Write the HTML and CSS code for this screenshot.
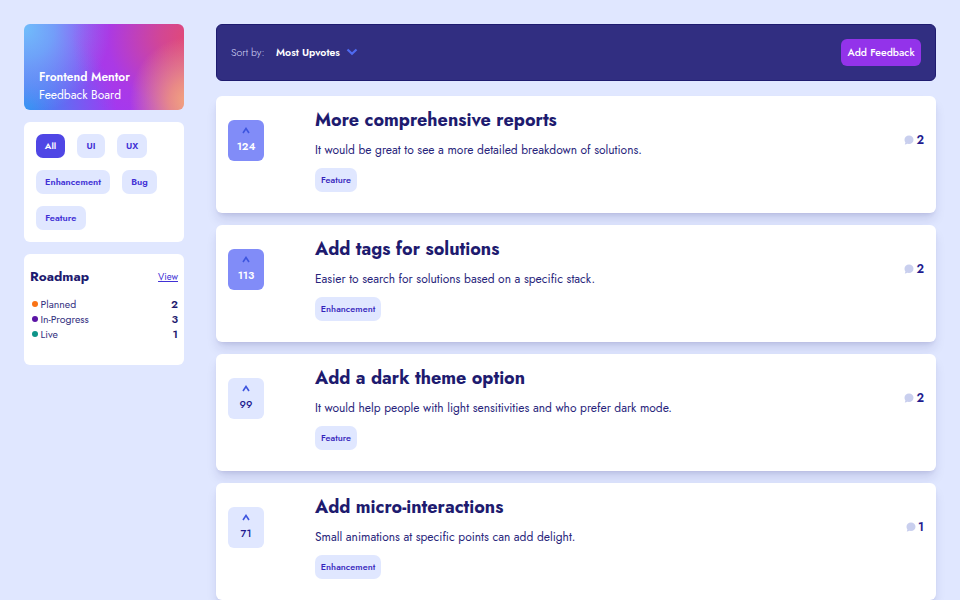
FILE: index.html
```html
<!DOCTYPE html>
<html lang="en">
<head>
<meta charset="utf-8">
<title>Frontend Mentor Feedback Board</title>
<link rel="stylesheet" href="styles.css">
</head>
<body>
<svg class="defs" width="0" height="0">
<symbol id="up" viewBox="0 0 8 7"><path d="M1 6 4 1.5 7 6" fill="none" stroke="currentColor" stroke-width="1.6"/></symbol>
<symbol id="bubble" viewBox="0 0 10 10"><path d="M5 .5C7.6.5 9.5 2.3 9.5 4.7S7.6 9 5 9L3.2 8.8Q2.2 9.7.8 9.6L1.4 7.6Q.5 6.4.5 4.7C.5 2.3 2.4.5 5 .5Z" fill="currentColor"/></symbol>
</svg>
<div class="page">
<aside class="sidebar">
<header class="brand"><h1>Frontend Mentor</h1><p>Feedback Board</p></header>
<nav class="filters">
<button class="chip active w-all">All</button><button class="chip w-ui">UI</button><button class="chip w-ux">UX</button><button class="chip w-enh">Enhancement</button><button class="chip w-bug">Bug</button><button class="chip w-feat">Feature</button>
</nav>
<section class="roadmap">
<div class="roadmap-head"><h2>Roadmap</h2><a href="#">View</a></div>
<ul>
<li><i class="dot planned"></i><span>Planned</span><b>2</b></li>
<li><i class="dot progress"></i><span>In-Progress</span><b>3</b></li>
<li><i class="dot live"></i><span>Live</span><b>1</b></li>
</ul>
</section>
</aside>
<main>
<div class="toolbar"><span class="sort">Sort by:</span><span class="selected">Most Upvotes</span><svg class="down" viewBox="0 0 12 8"><path d="M1.5 1.5 6 5.8 10.5 1.5" fill="none" stroke="currentColor" stroke-width="2.2"/></svg><button class="add">Add Feedback</button></div>
<article class="card">
<button class="vote voted"><svg><use href="#up"/></svg><span>124</span></button>
<div class="body"><h3>More comprehensive reports</h3><p>It would be great to see a more detailed breakdown of solutions.</p><span class="tag tag-feat">Feature</span></div>
<div class="comments"><svg><use href="#bubble"/></svg><span>2</span></div>
</article>
<article class="card">
<button class="vote voted"><svg><use href="#up"/></svg><span>113</span></button>
<div class="body"><h3>Add tags for solutions</h3><p>Easier to search for solutions based on a specific stack.</p><span class="tag tag-enh">Enhancement</span></div>
<div class="comments"><svg><use href="#bubble"/></svg><span>2</span></div>
</article>
<article class="card">
<button class="vote"><svg><use href="#up"/></svg><span>99</span></button>
<div class="body"><h3>Add a dark theme option</h3><p>It would help people with light sensitivities and who prefer dark mode.</p><span class="tag tag-feat">Feature</span></div>
<div class="comments"><svg><use href="#bubble"/></svg><span>2</span></div>
</article>
<article class="card">
<button class="vote"><svg><use href="#up"/></svg><span>71</span></button>
<div class="body"><h3>Add micro-interactions</h3><p>Small animations at specific points can add delight.</p><span class="tag tag-enh">Enhancement</span></div>
<div class="comments"><svg><use href="#bubble"/></svg><span>1</span></div>
</article>
</main>
</div>
</body>
</html>
```
FILE: styles.css
```css
* { box-sizing: border-box; margin: 0; padding: 0; }
html, body { height: 600px; overflow: hidden; }
body { background: #e0e7ff; color: #1e1b6f; font-family: Jost, Lato, sans-serif; font-size: 12px; }
button { border: 0; font-family: inherit; white-space: nowrap; }
.defs { display: block; height: 0; }
.page { display: grid; grid-template-columns: 160px 720px; column-gap: 32px; height: 600px; padding: 24px 24px 0; }
main { height: 576px; }
.sidebar { display: flex; flex-direction: column; gap: 12px; }
.brand { height: 86px; border-radius: 6px; padding: 44px 15px 0; color: #fff; white-space: nowrap;
  background: radial-gradient(ellipse 38% 75% at 104% 90%, #f5aa7c 0%, rgba(240,150,125,.85) 35%, rgba(225,90,140,0) 100%),
    radial-gradient(ellipse 74% 125% at 104% 15%, #e34a74 0%, rgba(222,74,125,.8) 25%, rgba(190,60,200,.3) 70%, rgba(162,56,242,0) 100%),
    radial-gradient(ellipse 54% 100% at 0 5%, #70bdfb 0%, rgba(108,175,250,.85) 35%, rgba(130,100,245,0) 100%),
    radial-gradient(ellipse 58% 100% at 0 100%, #2e94f2 0%, rgba(70,130,243,.85) 30%, rgba(130,80,245,0) 100%), #a238f2; }
.brand h1 { font-size: 12px; line-height: 18px; font-weight: 600; }
.brand p { font-size: 12px; line-height: 18px; }
.filters { height: 120px; padding: 12px; background: #fff; border-radius: 6px; display: flex; flex-wrap: wrap; gap: 12px; align-content: flex-start; }
.chip, .tag { height: 24px; border-radius: 7px; background: #e0e7ff; color: #4030d5; font-size: 9.25px; font-weight: 600; line-height: 24px; text-align: center; }
.tag { font-weight: 500; color: #3322bb; }
.chip.active { background: #4f46e5; color: #fff; }
.w-all { width: 29px; } .w-ui { width: 28px; } .w-ux { width: 30px; }
.w-enh { width: 74px; } .w-bug { width: 35px; } .w-feat { width: 49.5px; }
.roadmap { height: 111px; padding: 13px 6px; background: #fff; border-radius: 6px; }
.roadmap-head { display: flex; align-items: center; justify-content: space-between; height: 20px; margin-bottom: 9px; }
.roadmap h2 { font-size: 13.5px; line-height: 20px; font-weight: 700; }
.roadmap a { color: #4030d5; font-size: 9.5px; }
.roadmap ul { list-style: none; }
.roadmap li { display: flex; align-items: center; height: 15px; font-size: 10.5px; line-height: 15px; padding-top: 1px; }
.roadmap li span { color: #34317f; }
.roadmap b { margin-left: auto; font-size: 11px; font-weight: 600; }
.dot { flex: none; width: 6px; height: 6px; border-radius: 50%; margin: -1px 2.5px 0 2px; }
.planned { background: #f97316; } .progress { background: #5b14a5; } .live { background: #0d9488; }
.toolbar { display: flex; align-items: center; height: 57px; padding: 0 14px; margin-bottom: 15px; border: 1px solid #1e1b6f; border-radius: 6px; background: #312e81; color: #fff; }
.sort { width: 45px; font-size: 10.5px; font-weight: 300; color: #d8dafa; }
.selected { width: 69.5px; font-size: 10.5px; font-weight: 600; white-space: nowrap; }
.down { width: 12px; height: 8px; margin-top: -1px; color: #4f6af0; }
.add { width: 80px; height: 27px; margin-left: auto; border-radius: 6px; background: #9333ea; color: #fff; font-size: 10.5px; font-weight: 500; }
.card { display: flex; height: 117px; margin-bottom: 12px; padding: 0 12px; border-radius: 6px; background: #fff; box-shadow: 0 8px 12px -2px rgba(30,27,111,.14), 0 3px 5px -3px rgba(30,27,111,.16); }
.card:last-child { margin-bottom: 0; }
.vote { display: flex; flex-direction: column; align-items: center; width: 36px; height: 40.5px; margin-top: 24px; padding-top: 6.5px; border-radius: 6px; background: #e0e7ff; color: #1e1b8f; font-size: 10.5px; font-weight: 500; }
.vote svg { width: 8px; height: 7px; color: #3e55df; }
.vote span { line-height: 14px; margin-top: 6.5px; }
.voted { background: #818cf8; color: #fff; font-weight: 600; }
.body { width: 500px; margin-left: 51px; padding-top: 12px; white-space: nowrap; }
.body h3 { font-size: 18px; line-height: 24px; font-weight: 700; }
.body p { margin-top: 9px; font-size: 12px; line-height: 18px; color: #28257b; }
.tag { display: block; margin-top: 9px; }
.tag-feat { width: 42px; } .tag-enh { width: 66px; }
.comments { display: flex; align-items: center; gap: 2px; height: 20px; margin: 34px 0 0 auto; font-size: 12px; font-weight: 600; color: #1e1b8f; }
.comments svg { width: 10px; height: 10px; color: #c9cfee; }
```
